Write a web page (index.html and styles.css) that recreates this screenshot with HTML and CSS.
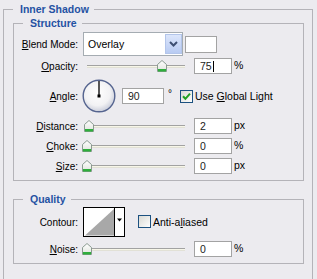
FILE: index.html
```html
<!DOCTYPE html>
<html lang="en">
<head>
<meta charset="UTF-8" />
<title>Layer Style - Inner Shadow</title>
<link rel="stylesheet" href="styles.css">
</head>
<body>

<fieldset class="group outer">
  <legend>Inner Shadow</legend>

  <fieldset class="group sub structure">
    <legend>Structure</legend>

    <div class="row r-blend">
      <span class="lbl"><u>B</u>lend Mode:</span>
      <div class="select">
        <span class="sel-text">Overlay</span>
        <span class="drop">
          <svg width="9" height="6" viewBox="0 0 9 6"><path d="M1 1 L4.5 4.5 L8 1" fill="none" stroke="#3e4f73" stroke-width="2"/></svg>
        </span>
      </div>
      <span class="swatch"></span>
    </div>

    <div class="row r-opacity">
      <span class="lbl"><u>O</u>pacity:</span>
      <div class="slider"><div class="track"></div><svg class="thumb" style="left:74px" width="10" height="12" viewBox="0 0 10 12"><use href="#thumb"/></svg></div>
      <span class="field">75<i class="caret"></i></span>
      <span class="unit">%</span>
    </div>

    <div class="row r-angle">
      <span class="lbl"><u>A</u>ngle:</span>
      <svg class="dial" width="34" height="34" viewBox="0 0 34 34">
        <defs>
          <radialGradient id="dialfill" cx="45%" cy="40%" r="62%">
            <stop offset="0" stop-color="#ffffff"/>
            <stop offset="0.65" stop-color="#f2f2f4"/>
            <stop offset="1" stop-color="#c6cad8"/>
          </radialGradient>
        </defs>
        <circle cx="17" cy="17" r="15.8" fill="url(#dialfill)" stroke="#55648f" stroke-width="1.4"/>
        <line x1="17" y1="2" x2="17" y2="17" stroke="#000" stroke-width="1.3"/>
        <rect x="15.5" y="15.5" width="3" height="3" fill="#000"/>
      </svg>
      <span class="field wide">90</span>
      <span class="deg">°</span>
      <svg class="check" width="13" height="13" viewBox="0 0 13 13"><use href="#box"/><path d="M3 6.3 L5.4 8.8 L10 3.6" fill="none" stroke="#21a121" stroke-width="2"/></svg>
      <span class="chk-text">Use <u>G</u>lobal Light</span>
    </div>

    <div class="row r-dist">
      <span class="lbl"><u>D</u>istance:</span>
      <div class="slider"><div class="track"></div><svg class="thumb" style="left:1px" width="10" height="12" viewBox="0 0 10 12"><use href="#thumb"/></svg></div>
      <span class="field">2</span>
      <span class="unit">px</span>
    </div>

    <div class="row r-next">
      <span class="lbl"><u>C</u>hoke:</span>
      <div class="slider"><div class="track"></div><svg class="thumb" style="left:-1px" width="10" height="12" viewBox="0 0 10 12"><use href="#thumb"/></svg></div>
      <span class="field">0</span>
      <span class="unit">%</span>
    </div>

    <div class="row r-next">
      <span class="lbl"><u>S</u>ize:</span>
      <div class="slider"><div class="track"></div><svg class="thumb" style="left:-1px" width="10" height="12" viewBox="0 0 10 12"><use href="#thumb"/></svg></div>
      <span class="field">0</span>
      <span class="unit">px</span>
    </div>
  </fieldset>

  <fieldset class="group sub quality">
    <legend>Quality</legend>

    <div class="row r-contour">
      <span class="lbl">Contour:</span>
      <svg class="contour" width="42" height="30" viewBox="0 0 42 30">
        <rect x="0.5" y="0.5" width="41" height="29" fill="#fff" stroke="#000"/>
        <polygon points="2,28.5 31,2 31,28.5" fill="#a8a8a8"/>
        <line x1="31.5" y1="1" x2="31.5" y2="29" stroke="#000"/>
        <polygon points="34,11.5 39,11.5 36.5,14.5" fill="#000"/>
      </svg>
      <svg class="check aa" width="13" height="13" viewBox="0 0 13 13"><use href="#box"/></svg>
      <span class="chk-text">Anti-a<u>l</u>iased</span>
    </div>

    <div class="row r-noise">
      <span class="lbl"><u>N</u>oise:</span>
      <div class="slider"><div class="track"></div><svg class="thumb" style="left:-1px" width="10" height="12" viewBox="0 0 10 12"><use href="#thumb"/></svg></div>
      <span class="field">0</span>
      <span class="unit">%</span>
    </div>
  </fieldset>
</fieldset>

<svg class="defs" width="0" height="0">
  <defs>
    <linearGradient id="thumbfill" x1="0" y1="0" x2="0" y2="1">
      <stop offset="0" stop-color="#ffffff"/>
      <stop offset="1" stop-color="#dfe3dc"/>
    </linearGradient>
    <linearGradient id="boxfill" x1="0" y1="0" x2="1" y2="1">
      <stop offset="0" stop-color="#d8d8d2"/>
      <stop offset="1" stop-color="#ffffff"/>
    </linearGradient>
    <g id="thumb">
      <path d="M0.5 4.5 L5 0.5 L9.5 4.5 L9.5 11.5 L0.5 11.5 Z" fill="url(#thumbfill)" stroke="#8a9a90"/>
      <rect x="1" y="9" width="8" height="2.5" fill="#2fae3c"/>
    </g>
    <g id="box">
      <rect x="0.5" y="0.5" width="12" height="12" fill="url(#boxfill)" stroke="#1c5180"/>
    </g>
  </defs>
</svg>

</body>
</html>
```

FILE: styles.css
```css
html { overflow: hidden; }
body { margin: 0; background: #ecebef; color: #000; font: 10px 'Liberation Sans', Tahoma, Arial, sans-serif; }
u { text-decoration: underline; text-underline-offset: 1px; }

.group { border: 1px solid #b4b3b8; margin: 0; padding: 0; min-width: 0; box-sizing: border-box; }
.group legend { font-weight: bold; font-size: 10.5px; line-height: 13px; color: #2552a3; padding: 0 5px 0 7px; }
.outer { margin: 3px 0 0 3px; width: 310px; padding: 1px 8px 15px 9px; border-bottom: none; }
.sub { width: 291px; }
.sub legend { margin-left: 9px; }
.structure { padding: 2px 0 6px; }
.quality { margin-top: 12px; padding: 1px 0 6px; }

.row { display: flex; align-items: center; height: 16px; }
.lbl { width: 64px; margin-right: 5px; text-align: right; flex-shrink: 0; white-space: nowrap; }
.r-blend { height: 24px; }
.r-opacity { margin-top: 2px; }
.r-angle { height: 34px; margin-top: 5px; }
.r-dist { margin-top: 5px; }
.r-next { margin-top: 4px; }
.r-contour { height: 30px; }
.r-noise { margin-top: 4px; }

.select { display: flex; width: 100px; height: 24px; box-sizing: border-box; border: 1px solid #a5acb2; background: #fff; }
.sel-text { flex: 1; padding-left: 4px; line-height: 22px; font-size: 10.5px; }
.drop { display: flex; align-items: center; justify-content: center; width: 17px; height: 20px; margin: 1px 0 0; box-sizing: border-box; border: 1px solid #b3c5ea; background: linear-gradient(#dce6fb, #b8cbf2); }
.swatch { width: 32px; height: 17px; margin-left: 2px; box-sizing: border-box; border: 1px solid #a3a3a3; background: #fff; }

.slider { position: relative; width: 103px; height: 16px; margin-right: 8px; flex-shrink: 0; }
.track { margin: 7px 0 0 4px; width: 98px; height: 3px; box-sizing: border-box; border-top: 1px solid #a2a2a2; border-bottom: 1px solid #e2e1d6; background: #f7f6e8; }
.thumb { position: absolute; top: 2px; }

.field { display: block; width: 38px; height: 16px; box-sizing: border-box; border: 1px solid #a3a3a3; background: #fff; padding-left: 5px; line-height: 14px; font-size: 10.5px; color: #222; }
.field.wide { width: 42px; margin-left: 6px; }
.caret { display: inline-block; width: 1px; height: 11px; background: #000; vertical-align: -2px; margin-left: 1px; }
.unit { margin-left: 2px; margin-top: -3px; font-size: 10.5px; }
.deg { width: 12px; padding-left: 4px; margin-top: -6px; font-size: 10px; }
.dial { margin-left: -1px; }

.check { flex-shrink: 0; }
.chk-text { margin-left: 2px; white-space: nowrap; font-size: 10.5px; }
.contour { flex-shrink: 0; }
.check.aa { margin-left: 13px; margin-top: -2px; }

.defs { position: absolute; }
```
